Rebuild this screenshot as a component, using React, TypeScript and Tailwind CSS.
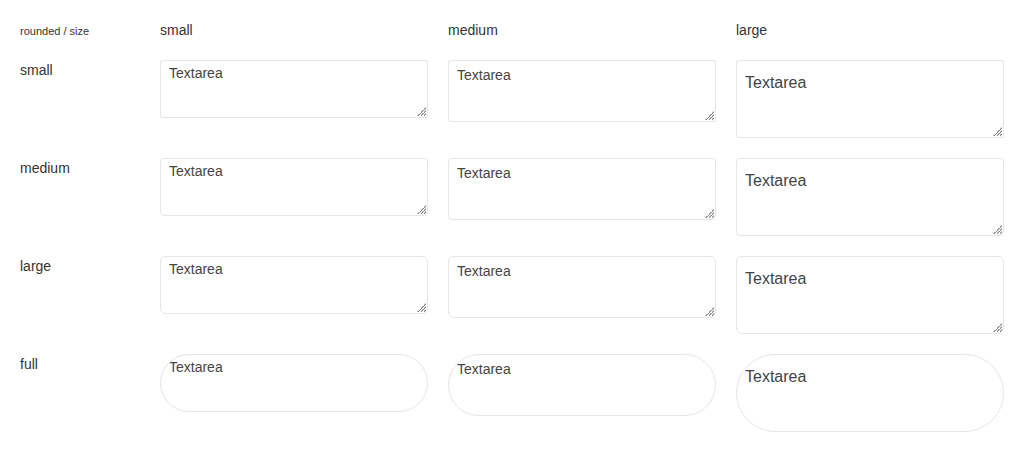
import React from "react";

const sizes = ["small", "medium", "large"] as const;
const roundeds = ["small", "medium", "large", "full"] as const;

const sizeClass = {
  small: "h-[58px] text-[14px] leading-[16px] pt-[4px]",
  medium: "h-[62px] text-[14px] leading-[16px] pt-[6px]",
  large: "h-[78px] text-[16px] leading-[24px] pt-[10px]",
};

const roundedClass = {
  small: "rounded-[2px]",
  medium: "rounded-[4px]",
  large: "rounded-[6px]",
  full: "rounded-full",
};

// hatched resize grip, the browser one looks different
function Grip() {
  return (
    <svg
      width="10"
      height="10"
      viewBox="0 0 10 10"
      className="pointer-events-none absolute bottom-[2px] right-[2px]"
    >
      <g strokeWidth="1" shapeRendering="crispEdges">
        <line x1="10" y1="1" x2="1" y2="10" stroke="#bbb" strokeDasharray="1 1" />
        <line x1="10" y1="2" x2="2" y2="10" stroke="#888" />
        <line x1="10" y1="4" x2="4" y2="10" stroke="#bbb" strokeDasharray="1 1" />
        <line x1="10" y1="5" x2="5" y2="10" stroke="#888" />
        <line x1="10" y1="7" x2="7" y2="10" stroke="#bbb" strokeDasharray="1 1" />
        <line x1="10" y1="8" x2="8" y2="10" stroke="#888" />
      </g>
    </svg>
  );
}

function Textarea({ size, rounded }: { size: string; rounded: string }) {
  return (
    <div className="relative">
      <textarea
        defaultValue="Textarea"
        className={`block w-full resize-none border border-[#e6e6e6] bg-white px-[8px] pb-[4px] text-[#444] outline-none ${sizeClass[size]} ${roundedClass[rounded]}`}
      />
      {rounded !== "full" && <Grip />}
    </div>
  );
}

export default function App() {
  return (
    <div
      className="bg-white p-[20px] text-[#333]"
      style={{ fontFamily: '"Liberation Sans", Arial, sans-serif' }}
    >
      <div className="grid grid-cols-[120px_268px_268px_268px] gap-x-[20px] gap-y-[20px]">
        <div className="text-[11px] leading-[22px] h-[20px]">rounded / size</div>
        {sizes.map((s) => (
          <div key={s} className="text-[14px] leading-[20px]">
            {s}
          </div>
        ))}
        {roundeds.map((r) => (
          <React.Fragment key={r}>
            <div className="text-[14px] leading-[20px]">{r}</div>
            {sizes.map((s) => (
              <div key={s} className="h-[78px]">
                <Textarea size={s} rounded={r} />
              </div>
            ))}
          </React.Fragment>
        ))}
      </div>
    </div>
  );
}
